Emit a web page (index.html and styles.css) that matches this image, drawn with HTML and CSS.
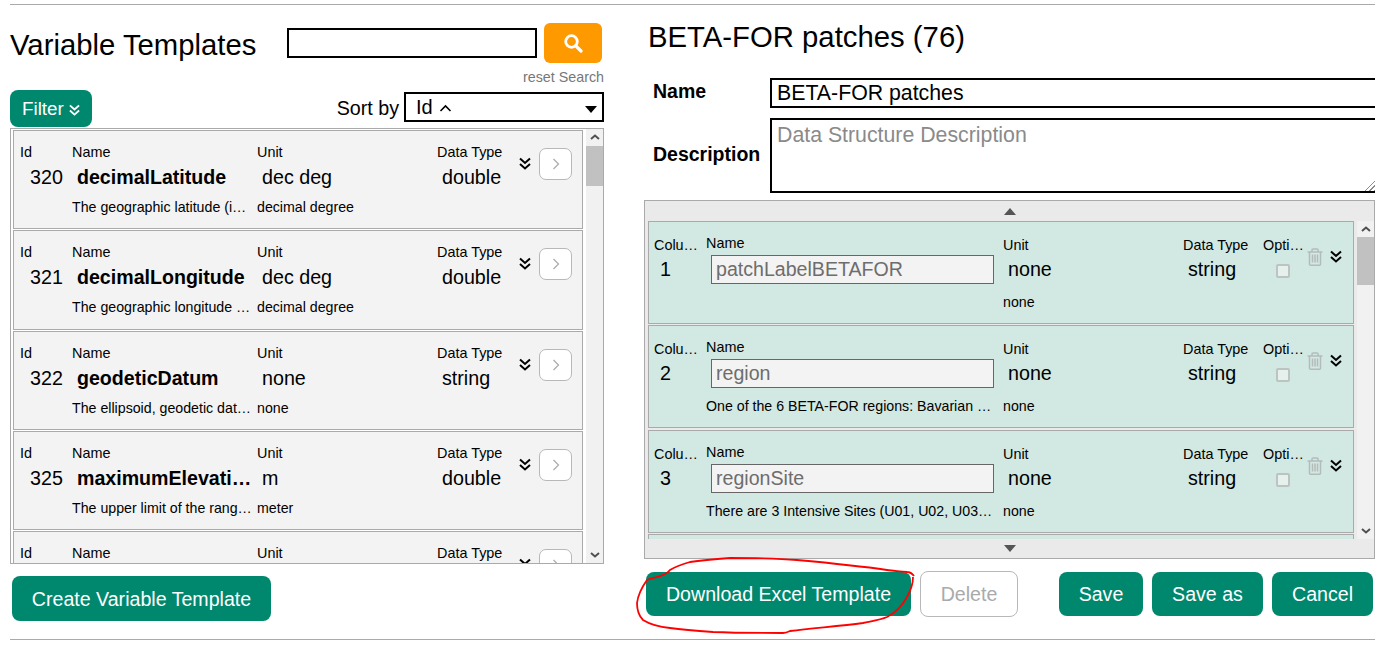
FILE: index.html
```html
<!DOCTYPE html>
<html lang="en">
<head>
<meta charset="utf-8">
<title>Variable Templates</title>
<link rel="stylesheet" href="styles.css">
</head>
<body>
<svg width="0" height="0" class="defs">
  <symbol id="dbl" viewBox="0 0 12 13"><path d="M1 1.5 6 6 11 1.5M1 7 6 11.5 11 7" fill="none" stroke="currentColor" stroke-width="2"/></symbol>
  <symbol id="trash" viewBox="0 0 16 18"><path d="M.5 4h15M5 4V1.8Q5 1 6 1h4q1 0 1 .8V4M2.5 4v12.2q0 1 1 1h9q1 0 1-1V4M5.5 6.5v8M8 6.5v8M10.5 6.5v8" fill="none" stroke="currentColor" stroke-width="1.5"/></symbol>
  <symbol id="gt" viewBox="0 0 8 12"><path d="M1.5 1 6.5 6 1.5 11" fill="none" stroke="currentColor" stroke-width="1.2"/></symbol>
</svg>
<hr class="rule rule-top">
<main class="main">
  <section class="left">
    <div class="head">
      <h1 class="title">Variable Templates</h1>
      <input class="search" type="text" aria-label="Search">
      <button class="search-btn" aria-label="Search"><svg width="20" height="20" viewBox="0 0 20 20"><circle cx="8.5" cy="8.5" r="5.8" fill="none" stroke="#fff" stroke-width="2.8"/><path d="M12.8 12.8 18 18" stroke="#fff" stroke-width="3.2" stroke-linecap="round"/></svg></button>
    </div>
    <div class="reset">reset Search</div>
    <div class="tools">
      <button class="btn filter">Filter <svg class="filter-ic" width="11" height="12"><use href="#dbl"/></svg></button>
      <span class="sort-label">Sort by</span>
      <div class="select"><span>Id</span><svg class="up" width="13" height="8" viewBox="0 0 13 8"><path d="M1.5 7 6.5 2 11.5 7" fill="none" stroke="#000" stroke-width="1.6"/></svg><i class="caret"></i></div>
    </div>
    <div class="list">
      <div class="items">
        <article class="vcard">
          <span class="lab">Id</span><span class="lab">Name</span><span class="lab">Unit</span><span class="lab">Data Type</span>
          <div class="acts"><svg class="dbl" width="12" height="13"><use href="#dbl"/></svg><span class="go"><svg width="8" height="12"><use href="#gt"/></svg></span></div>
          <span class="val idv">320</span><span class="val name">decimalLatitude</span><span class="val">dec deg</span><span class="val">double</span>
          <span class="desc wide">The geographic latitude (in decimal degrees)</span><span class="desc">decimal degree</span>
        </article>
        <article class="vcard">
          <span class="lab">Id</span><span class="lab">Name</span><span class="lab">Unit</span><span class="lab">Data Type</span>
          <div class="acts"><svg class="dbl" width="12" height="13"><use href="#dbl"/></svg><span class="go"><svg width="8" height="12"><use href="#gt"/></svg></span></div>
          <span class="val idv">321</span><span class="val name">decimalLongitude</span><span class="val">dec deg</span><span class="val">double</span>
          <span class="desc wide">The geographic longitude in decimal degrees</span><span class="desc">decimal degree</span>
        </article>
        <article class="vcard">
          <span class="lab">Id</span><span class="lab">Name</span><span class="lab">Unit</span><span class="lab">Data Type</span>
          <div class="acts"><svg class="dbl" width="12" height="13"><use href="#dbl"/></svg><span class="go"><svg width="8" height="12"><use href="#gt"/></svg></span></div>
          <span class="val idv">322</span><span class="val name">geodeticDatum</span><span class="val">none</span><span class="val">string</span>
          <span class="desc wide">The ellipsoid, geodetic datum, or spatial reference</span><span class="desc">none</span>
        </article>
        <article class="vcard">
          <span class="lab">Id</span><span class="lab">Name</span><span class="lab">Unit</span><span class="lab">Data Type</span>
          <div class="acts"><svg class="dbl" width="12" height="13"><use href="#dbl"/></svg><span class="go"><svg width="8" height="12"><use href="#gt"/></svg></span></div>
          <span class="val idv">325</span><span class="val name">maximumElevationInMeters</span><span class="val">m</span><span class="val">double</span>
          <span class="desc wide">The upper limit of the range of elevation</span><span class="desc">meter</span>
        </article>
        <article class="vcard">
          <span class="lab">Id</span><span class="lab">Name</span><span class="lab">Unit</span><span class="lab">Data Type</span>
          <div class="acts"><svg class="dbl" width="12" height="13"><use href="#dbl"/></svg><span class="go"><svg width="8" height="12"><use href="#gt"/></svg></span></div>
        </article>
      </div>
      <div class="sbar sbar-left">
        <svg class="sb-arrow" width="10" height="6" viewBox="0 0 10 6"><path d="M1 5 5 1.5 9 5" fill="none" stroke="#505050" stroke-width="2"/></svg>
        <div class="thumb thumb-left"></div>
        <svg class="sb-arrow sb-down" width="10" height="6" viewBox="0 0 10 6"><path d="M1 1 5 4.5 9 1" fill="none" stroke="#505050" stroke-width="2"/></svg>
      </div>
    </div>
    <button class="btn create">Create Variable Template</button>
  </section>

  <section class="right">
    <h2 class="title r-title">BETA-FOR patches (76)</h2>
    <div class="field f-name">
      <label class="flabel">Name</label>
      <input class="finput" type="text" value="BETA-FOR patches" aria-label="Name">
    </div>
    <div class="field f-desc">
      <label class="flabel">Description</label>
      <textarea class="farea" placeholder="Data Structure Description" aria-label="Description"></textarea>
    </div>
    <div class="panel">
      <div class="pan-arrow"><i class="tri-up"></i></div>
      <div class="pan-body">
        <div class="items">
          <article class="ccard">
            <span class="lab lab-col">Colu…</span><span class="lab lab-name">Name</span><span class="lab">Unit</span><span class="lab">Data Type</span><span class="lab">Opti…</span>
            <div class="cacts"><svg class="trash" width="16" height="18"><use href="#trash"/></svg><svg class="dbl" width="12" height="13"><use href="#dbl"/></svg></div>
            <span class="val idc">1</span><input class="cinput" value="patchLabelBETAFOR" readonly aria-label="Column name"><span class="val">none</span><span class="val">string</span><span class="chk-cell"><i class="chk"></i></span>
            <span class="desc cwide"></span><span class="desc">none</span>
          </article>
          <article class="ccard">
            <span class="lab lab-col">Colu…</span><span class="lab lab-name">Name</span><span class="lab">Unit</span><span class="lab">Data Type</span><span class="lab">Opti…</span>
            <div class="cacts"><svg class="trash" width="16" height="18"><use href="#trash"/></svg><svg class="dbl" width="12" height="13"><use href="#dbl"/></svg></div>
            <span class="val idc">2</span><input class="cinput" value="region" readonly aria-label="Column name"><span class="val">none</span><span class="val">string</span><span class="chk-cell"><i class="chk"></i></span>
            <span class="desc cwide">One of the 6 BETA-FOR regions: Bavarian Forest, Hainich</span><span class="desc">none</span>
          </article>
          <article class="ccard">
            <span class="lab lab-col">Colu…</span><span class="lab lab-name">Name</span><span class="lab">Unit</span><span class="lab">Data Type</span><span class="lab">Opti…</span>
            <div class="cacts"><svg class="trash" width="16" height="18"><use href="#trash"/></svg><svg class="dbl" width="12" height="13"><use href="#dbl"/></svg></div>
            <span class="val idc">3</span><input class="cinput" value="regionSite" readonly aria-label="Column name"><span class="val">none</span><span class="val">string</span><span class="chk-cell"><i class="chk"></i></span>
            <span class="desc cwide">There are 3 Intensive Sites (U01, U02, U03) per region</span><span class="desc">none</span>
          </article>
          <article class="ccard"></article>
        </div>
        <div class="sbar sbar-right">
          <svg class="sb-arrow" width="10" height="6" viewBox="0 0 10 6"><path d="M1 5 5 1.5 9 5" fill="none" stroke="#505050" stroke-width="2"/></svg>
          <div class="thumb thumb-right"></div>
          <svg class="sb-arrow sb-down" width="10" height="6" viewBox="0 0 10 6"><path d="M1 1 5 4.5 9 1" fill="none" stroke="#505050" stroke-width="2"/></svg>
        </div>
      </div>
      <div class="pan-arrow pan-arrow-b"><i class="tri-down"></i></div>
    </div>
    <div class="actions">
      <button class="btn a-dl">Download Excel Template</button>
      <button class="btn-ghost">Delete</button>
      <button class="btn a-save">Save</button>
      <button class="btn a-saveas">Save as</button>
      <button class="btn a-cancel">Cancel</button>
    </div>
  </section>
</main>
<hr class="rule">
<svg class="scribble" width="300" height="90" viewBox="630 550 300 90"><path d="M914 576C911 572 908 572 907 572C900 571 893 571 887 570C860 566 830 563 797 560C775 558 752 558 730 558C716 559 703 560 690 562C683 564 676 566 670 570C665 577 654 577 647 580C642 587 638 595 637 603C637 610 639 616 643 620C651 625 660 627 670 628C684 630 698 631 713 632C736 633 760 633 783 633C785 633 788 632 790 631C815 628 840 626 863 623C872 621 880 620 887 617C895 613 902 606 907 597C911 590 913 584 913 577" fill="none" stroke="#f00" stroke-width="1.8"/></svg>
</body>
</html>
```

FILE: styles.css
```css
* { box-sizing: border-box; }
html, body { margin: 0; padding: 0; }
body {
  position: relative;
  width: 1388px;
  height: 649px;
  overflow: hidden;
  background: #fff;
  color: #000;
  font-family: "Liberation Sans", Arial, sans-serif;
}
.defs { position: absolute; }
.rule {
  display: block;
  width: 1365px;
  height: 1px;
  margin: 0 0 0 10px;
  border: 0;
  background: #aaa;
}
.rule-top { margin-top: 4px; }
.main {
  display: flex;
  gap: 40px;
  height: 634px;
  margin-left: 10px;
  width: 1365px;
}
.left { width: 594px; flex: none; padding-top: 18px; }
.right { width: 731px; flex: none; padding-top: 16px; }

.title { margin: 0; font-size: 29.3px; font-weight: 400; line-height: 32px; white-space: nowrap; }
.head { display: flex; align-items: center; height: 40px; }
.head .title { width: 277px; padding-top: 4px; }
.search { width: 250px; height: 30px; border: 2px solid #000; background: #fff; padding: 0; }
.search-btn {
  display: flex; align-items: center; justify-content: center;
  width: 58px; height: 40px; margin-left: 7px; padding: 0;
  border: 0; border-radius: 6px; background: #ff9900;
}
.reset { margin-top: 6px; height: 16px; font-size: 14.3px; line-height: 16px; text-align: right; color: #777; }
.tools { display: flex; align-items: flex-start; height: 37px; margin-top: 5px; }
.btn {
  border: 0; border-radius: 8px; background: #00886f; color: #fff;
  font-family: inherit; font-size: 19.6px; padding: 0; white-space: nowrap;
}
.filter { width: 82px; height: 37px; font-size: 18.8px; padding-top: 1px; }
.filter-ic { vertical-align: -1px; color: #fff; }
.sort-label { margin-left: auto; font-size: 19.7px; line-height: 36px; margin-right: 5px; }
.select {
  display: flex; align-items: center; position: relative;
  width: 200px; height: 30px; margin-top: 2px; padding: 1px 0 0 10px;
  border: 2px solid #000; font-size: 20px;
}
.up { margin-left: 6px; }
.caret {
  margin-left: auto; margin-right: 5px; margin-top: 3px;
  border-left: 6.5px solid transparent; border-right: 6.5px solid transparent; border-top: 7px solid #000;
}
.list {
  display: flex; height: 436px; margin-top: 1px; overflow: hidden;
  border: 1px solid #aaa; padding-left: 2px;
}
.items { flex: 1; min-width: 0; overflow: hidden; }
.vcard {
  display: grid;
  grid-template-columns: 52px 185px 180px 82px 64px;
  grid-template-rows: 16px 29px 26px;
  height: 99.3px;
  margin: 1px 0 0;
  padding: 13px 0 0 6px;
  background: #f3f3f3;
  border: 1px solid #aaa;
}
.ccard {
  display: grid;
  grid-template-columns: 52px 297px 180px 80px 45px 41px;
  grid-template-rows: 16px 31px 26px;
  height: 103px;
  margin-bottom: 1.4px;
  padding: 15px 0 0 5px;
  background: #d2e8e2;
  border: 1px solid #aaa;
}
.lab { font-size: 14.4px; line-height: 16px; white-space: nowrap; }
.val { align-self: end; font-size: 19.7px; line-height: 24px; padding-left: 5px; white-space: nowrap; overflow: hidden; text-overflow: ellipsis; }
.idv { padding-left: 10px; }
.name { font-weight: 700; padding-right: 4px; font-size: 19.6px; }
.desc { align-self: end; font-size: 14.2px; line-height: 16px; white-space: nowrap; overflow: hidden; text-overflow: ellipsis; }
.vcard .wide { grid-column: 1 / span 2; margin-left: 52px; padding-right: 5px; }
.acts { grid-row: 1 / span 2; grid-column: 5; display: flex; align-items: flex-start; }
.dbl { color: #000; flex: none; }
.acts .dbl { margin: 13px 0 0 0; }
.go {
  display: flex; align-items: center; justify-content: center;
  width: 33px; height: 32px; margin: 4px 0 0 8px;
  background: #fff; border: 1px solid #b8b8b8; border-radius: 7px; color: #aaa;
}
.sbar { position: relative; flex: none; background: #f1f1f1; display: flex; flex-direction: column; align-items: center; }
.sbar-left { width: 17px; margin-left: 3px; }
.sb-arrow { flex: none; margin-top: 5px; }
.sb-down { margin-top: auto; margin-bottom: 5px; }
.thumb { background: #c1c1c1; width: 100%; flex: none; }
.thumb-left { height: 40px; margin-top: 6px; }
.create { display: block; width: 259px; height: 45px; margin: 12px 0 0 2px; padding-top: 1px; }

.r-title { margin-left: 4px; }
.field { display: flex; position: relative; }
.f-name { margin-top: 25px; height: 30px; }
.f-desc { margin-top: 10px; height: 75px; }
.f-desc::after {
  content: "";
  position: absolute; right: 0; bottom: 2px;
  width: 13px; height: 13px;
  background: repeating-linear-gradient(135deg, transparent 0 2px, #8c8c8c 2px 3px);
  clip-path: polygon(100% 0, 100% 100%, 0 100%);
}
.flabel { width: 126px; padding-left: 9px; font-size: 19.5px; font-weight: 700; flex: none; }
.f-name .flabel { line-height: 27px; }
.f-desc .flabel { line-height: 72px; }
.finput, .farea {
  flex: 1; min-width: 0; margin: 0; padding: 0 0 0 5px;
  border: 2px solid #000; border-right: 0; background: #fff; color: #000;
  font-family: inherit; font-size: 21.3px; outline: 0;
}
.farea { resize: none; padding-top: 3px; }
.farea::placeholder { color: #8a8a8a; opacity: 1; }
.panel {
  display: flex; flex-direction: column;
  height: 359px; margin-top: 7px; background: #eaeaea; border: 1px solid #aaa;
}
.pan-arrow { display: flex; align-items: center; justify-content: center; height: 20px; flex: none; padding-right: 0; }
.pan-arrow-b { height: 19px; }
.tri-up { border-left: 6.5px solid transparent; border-right: 6.5px solid transparent; border-bottom: 7px solid #555; }
.tri-down { border-left: 6.5px solid transparent; border-right: 6.5px solid transparent; border-top: 7px solid #555; }
.pan-body { display: flex; flex: 1; min-height: 0; margin-left: 3px; overflow: hidden; }
.sbar-right { width: 17px; margin-left: 3px; }
.thumb-right { height: 48px; margin-top: 5px; }
.lab-name { margin-top: -2px; }
.idc { padding-left: 6px; }
.ccard .val { align-self: start; margin-top: 4px; }
.cinput {
  width: 283px; height: 29px; margin: 2px 0 0 5px; padding: 0 0 0 4px;
  background: #f3f3f3; border: 1px solid #666; color: #6d6d6d;
  font-family: inherit; font-size: 19.6px; outline: 0;
}
.chk-cell { padding: 11px 0 0 13px; }
.chk { display: block; width: 14px; height: 14px; background: #e6f0ed; border: 2px solid #bcc4c2; border-radius: 2px; }
.cacts { grid-row: 1 / span 2; grid-column: 6; display: flex; align-items: flex-start; gap: 7px; margin-left: -1px; }
.trash { color: #b4bcba; flex: none; margin-top: 11px; }
.cacts .dbl { margin-top: 13px; }
.cwide { grid-column: 1 / span 2; margin-left: 52px; padding-right: 8px; }
.actions { display: flex; align-items: center; height: 46px; margin-top: 12px; padding-left: 2px; }
.actions .btn { height: 44px; }
.a-dl { width: 265px; }
.btn-ghost {
  width: 98px; height: 46px; margin-left: 9px; padding: 0;
  background: #fff; border: 1px solid #b8b8b8; border-radius: 8px; color: #aaa;
  font-family: inherit; font-size: 19.6px;
}
.a-save { width: 84px; margin-left: 41px; }
.a-saveas { width: 111px; margin-left: 9px; }
.a-cancel { width: 101px; margin-left: 9px; }
.scribble { position: absolute; left: 630px; top: 550px; pointer-events: none; }
```
